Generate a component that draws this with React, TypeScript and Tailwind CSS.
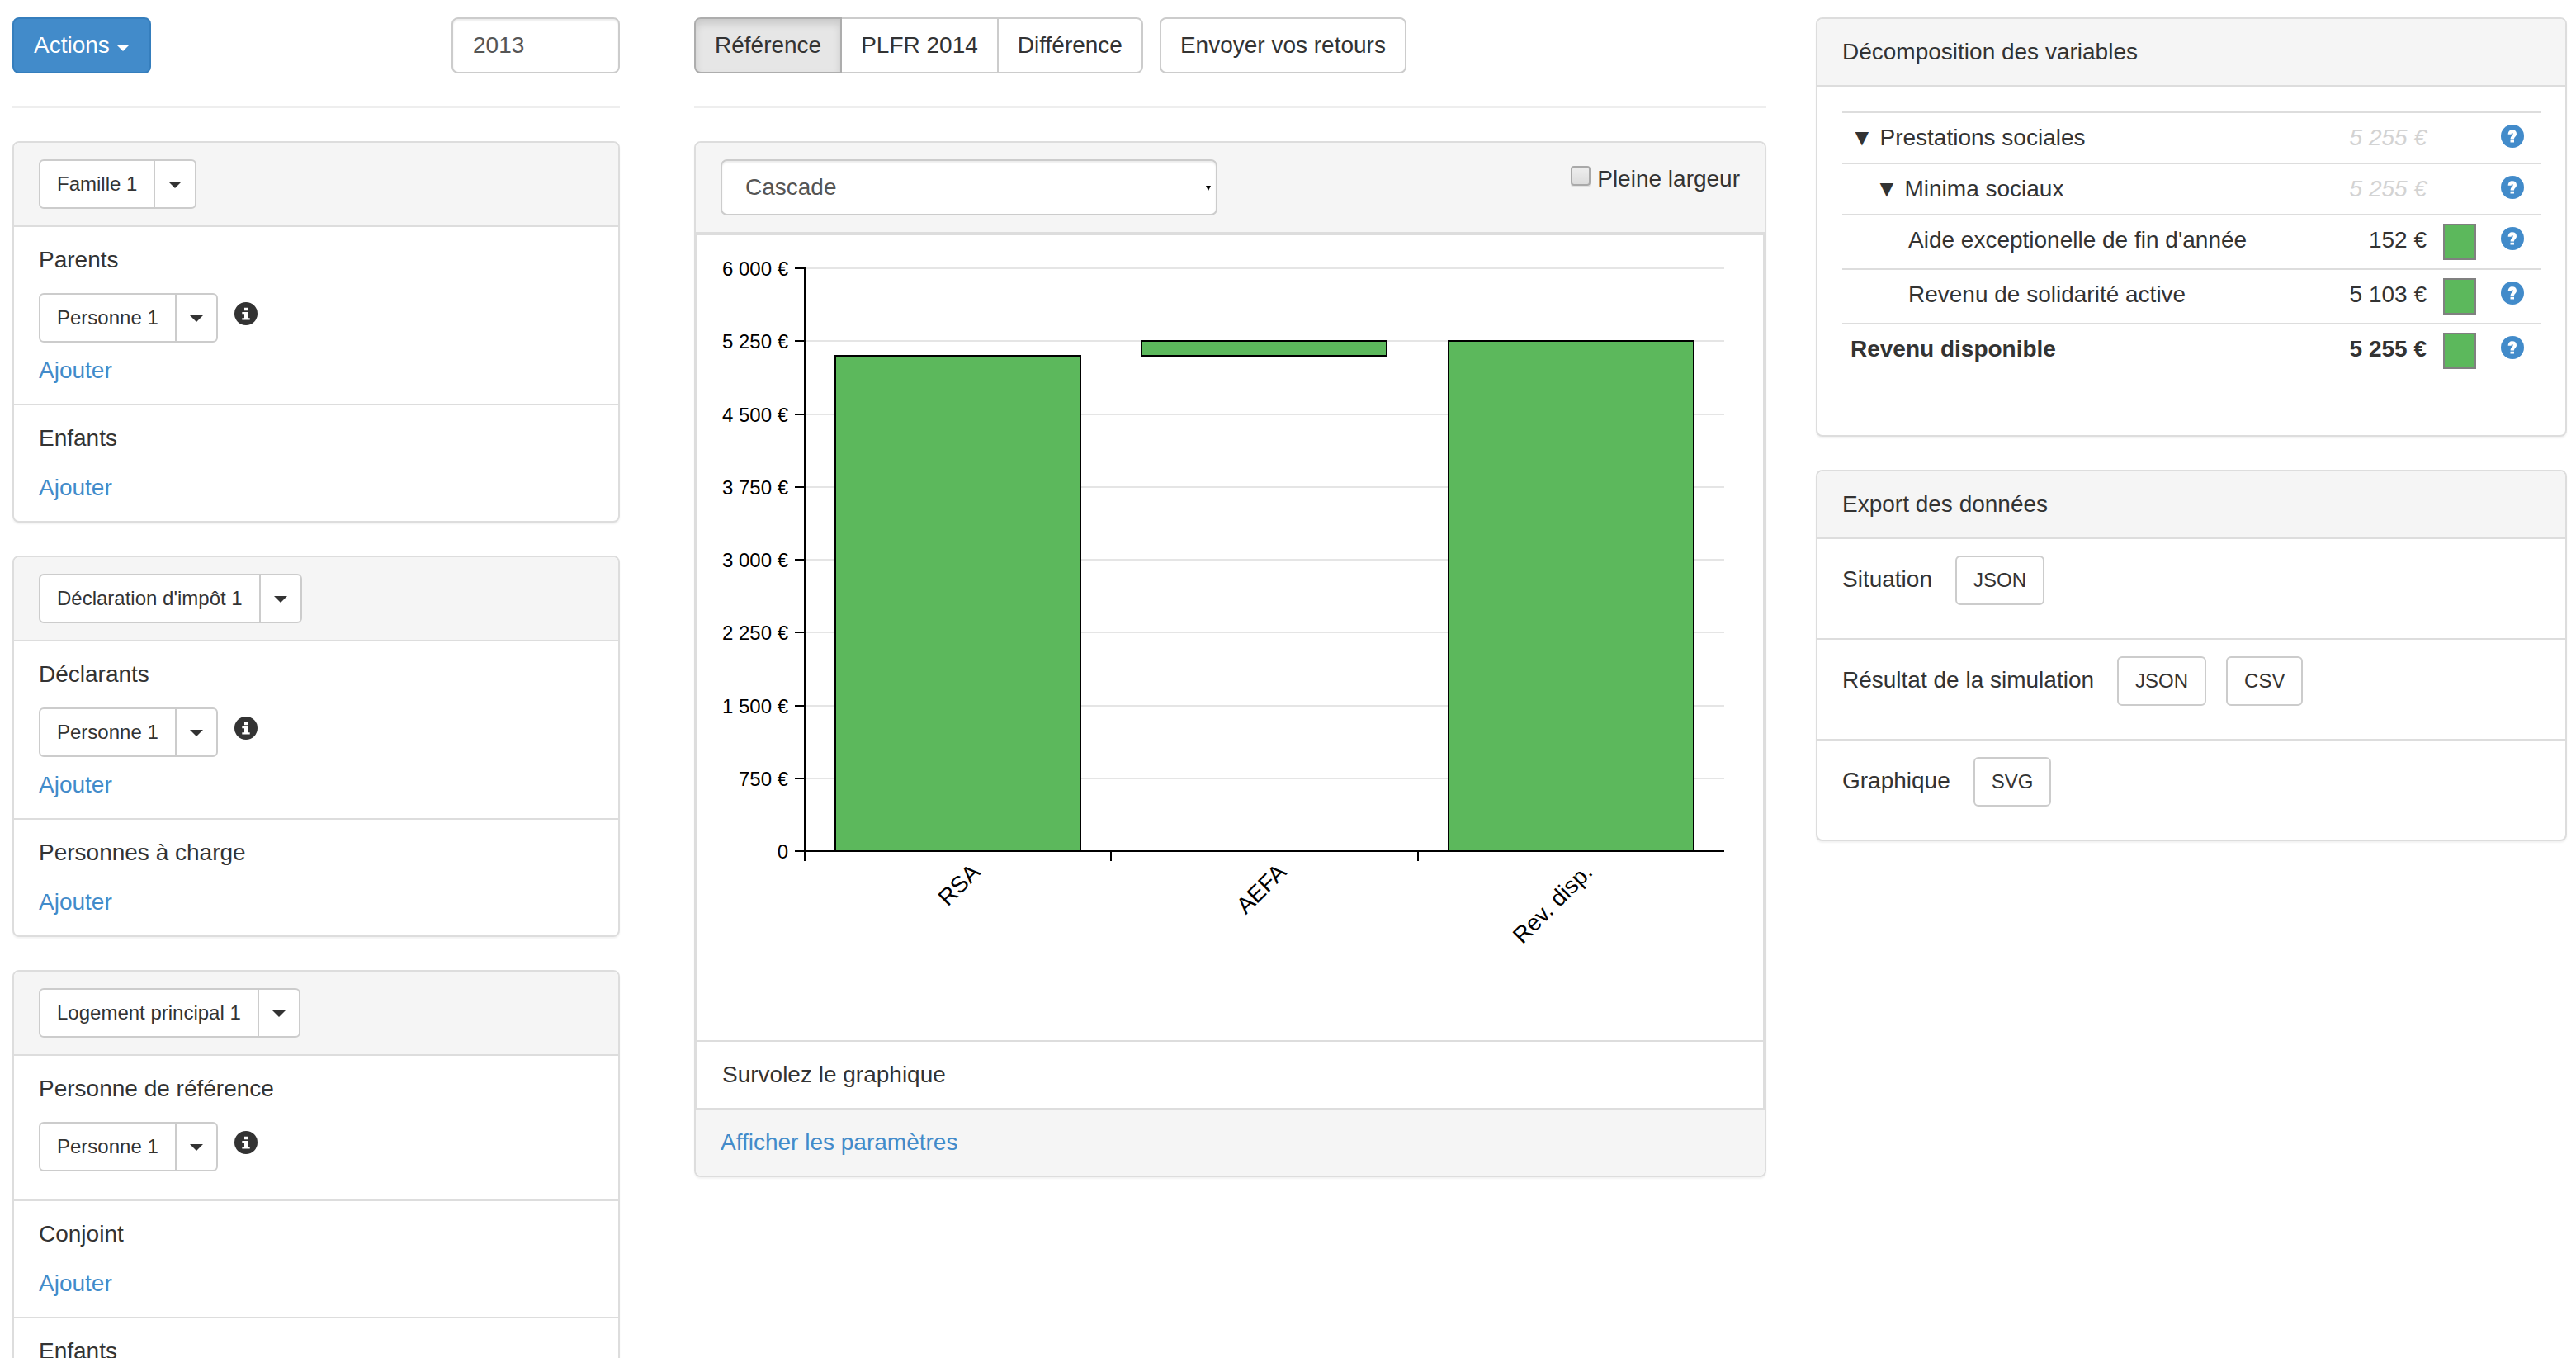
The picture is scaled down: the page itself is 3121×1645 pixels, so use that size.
import { useState, type ReactNode } from "react";

const panelClass =
  "flex flex-col overflow-hidden rounded-lg border-2 border-[#ddd] bg-white shadow-[0_2px_2px_rgba(0,0,0,0.05)]";
const smallButtonClass =
  "border-2 border-[#ccc] bg-white text-[24px] leading-9 hover:bg-[#ebebeb]";
const buttonClass =
  "border-2 py-3 text-[28px] leading-10 focus-visible:outline-2 focus-visible:outline-[#66afe9]";

function Caret({ className = "" }: { className?: string }) {
  return (
    <svg className={`h-2 w-4 shrink-0 fill-current ${className}`} viewBox="0 0 16 8" aria-hidden="true">
      <path d="M0 0h16L8 8z" />
    </svg>
  );
}

function InfoIcon() {
  return (
    <svg className="size-7" viewBox="0 0 28 28" aria-hidden="true">
      <circle cx="14" cy="14" r="14" fill="#333" />
      <path fill="#fff" d="M12 6.800h4.500v3.500H12zM9.300 12h7.200v7.200h2.200v2.200H9.300v-2.200h2.700v-5H9.300z" />
    </svg>
  );
}

function HelpIcon() {
  return (
    <svg className="size-7" viewBox="0 0 28 28" aria-hidden="true">
      <circle cx="14" cy="14" r="14" fill="#428bca" />
      <path
        fill="#fff"
        d="M8.700 11.800C8.700 8.200 10.800 6.200 13.900 6.200C17 6.200 19 8.100 19 10.900C19 14.400 16 14.500 16 17.400H11.600C11.600 13.800 14.600 13.200 14.600 11.300C14.600 10.300 14.300 9.900 13.700 9.900C13 9.900 12.700 10.500 12.700 11.800ZM11.500 18.800H16V21.600H11.500Z"
      />
    </svg>
  );
}

function SplitButton({ label }: { label: string }) {
  return (
    <div className="flex">
      <button type="button" className={`${smallButtonClass} rounded-l-md px-5 py-2.5`}>
        {label}
      </button>
      <button
        type="button"
        aria-label={`Options de ${label}`}
        className={`${smallButtonClass} -ml-0.5 flex items-center rounded-r-md px-4`}
      >
        <Caret className="mt-0.5" />
      </button>
    </div>
  );
}

type Role = { title: string; person?: string; canAdd: boolean };

function EntityPanel({ name, roles }: { name: string; roles: Role[] }) {
  return (
    <section className={panelClass}>
      <header className="flex bg-[#f5f5f5] px-[30px] py-5">
        <SplitButton label={name} />
      </header>
      {roles.map((role) => (
        <div key={role.title} className="border-t-2 border-[#ddd] px-[30px] py-5">
          <p className="mb-5">{role.title}</p>
          {role.person && (
            <div className="mb-3.5 flex items-start gap-5">
              <SplitButton label={role.person} />
              <button type="button" aria-label={`Informations sur ${role.person}`} className="mt-[11px]">
                <InfoIcon />
              </button>
            </div>
          )}
          {role.canAdd && (
            <a href="#ajouter" className="block text-[#428bca]">
              Ajouter
            </a>
          )}
        </div>
      ))}
    </section>
  );
}

const entities: { name: string; roles: Role[] }[] = [
  {
    name: "Famille 1",
    roles: [
      { title: "Parents", person: "Personne 1", canAdd: true },
      { title: "Enfants", canAdd: true },
    ],
  },
  {
    name: "Déclaration d'impôt 1",
    roles: [
      { title: "Déclarants", person: "Personne 1", canAdd: true },
      { title: "Personnes à charge", canAdd: true },
    ],
  },
  {
    name: "Logement principal 1",
    roles: [
      { title: "Personne de référence", person: "Personne 1", canAdd: false },
      { title: "Conjoint", canAdd: true },
      { title: "Enfants", canAdd: true },
    ],
  },
];

const bars = [
  { label: "RSA", from: 0, to: 5103 },
  { label: "AEFA", from: 5103, to: 5255 },
  { label: "Rev. disp.", from: 0, to: 5255 },
];
const yTicks = [0, 750, 1500, 2250, 3000, 3750, 4500, 5250, 6000];

const formatEuros = (value: number) =>
  value === 0 ? "0" : `${String(value).replace(/(\d)(\d{3})$/, "$1\u00a0$2")}\u00a0€`;

function WaterfallChart() {
  const left = 130;
  const right = 1244;
  const top = 40;
  const bottom = 746;
  const band = (right - left) / bars.length;
  const y = (value: number) => Math.round(bottom - (value / 6000) * (bottom - top));
  return (
    <svg className="block h-auto w-full" viewBox="0 0 1291 975" role="img" aria-label="Cascade">
      {yTicks.slice(1).map((tick) => (
        <line key={tick} x1={left} x2={right} y1={y(tick)} y2={y(tick)} stroke="#e5e5e5" strokeWidth="2" />
      ))}
      {bars.map((bar, index) => (
        <rect
          key={bar.label}
          x={Math.round(left + band * (index + 0.1))}
          y={y(bar.to)}
          width={Math.round(band * 0.8)}
          height={y(bar.from) - y(bar.to)}
          fill="#5cb85c"
          stroke="#000"
          strokeWidth="2"
        />
      ))}
      <g stroke="#000" strokeWidth="2">
        <line x1={left} x2={left} y1={top - 1} y2={bottom + 12} />
        <line x1={left} x2={right} y1={bottom} y2={bottom} />
        {yTicks.map((tick) => (
          <line key={tick} x1={left - 12} x2={left} y1={y(tick)} y2={y(tick)} />
        ))}
        {[1, 2].map((index) => {
          const x = Math.round(left + band * index);
          return <line key={index} x1={x} x2={x} y1={bottom} y2={bottom + 12} />;
        })}
      </g>
      <g fontSize="24" textAnchor="end">
        {yTicks.map((tick) => (
          <text key={tick} x={left - 20} y={y(tick) + 9}>
            {formatEuros(tick)}
          </text>
        ))}
      </g>
      <g fontSize="28" textAnchor="end">
        {bars.map((bar, index) => {
          const x = Math.round(left + band * (index + 0.5)) + 28;
          return (
            <text key={bar.label} transform={`translate(${x} ${bottom + 27}) rotate(-45)`}>
              {bar.label}
            </text>
          );
        })}
      </g>
    </svg>
  );
}

function VariableRow({
  name,
  indent,
  value,
  kind,
}: {
  name: ReactNode;
  indent: string;
  value: string;
  kind: "group" | "leaf" | "total";
}) {
  const weight = kind === "total" ? "font-bold" : "font-normal";
  return (
    <tr className="border-t-2 border-[#ddd] align-top">
      <th scope="row" className={`py-2.5 pr-2.5 text-left ${weight} ${indent}`}>
        {name}
      </th>
      <td
        className={`px-2.5 py-2.5 text-right whitespace-nowrap ${weight} ${
          kind === "group" ? "text-[#d3d3d3] italic" : ""
        }`}
      >
        {value}
      </td>
      <td className="w-[60px] px-2.5 py-2.5">
        {kind !== "group" && <div className="h-11 w-10 border-2 border-[#808080] bg-[#5cb85c]" />}
      </td>
      <td className="w-[68px] px-2.5 py-2.5">
        <button type="button" aria-label="Aide" className="mx-auto mt-1 block">
          <HelpIcon />
        </button>
      </td>
    </tr>
  );
}

function ExportRow({ label, formats }: { label: string; formats: string[] }) {
  return (
    <div className="flex items-baseline gap-7 border-t-2 border-[#ddd] px-[30px] pt-5 pb-10">
      <span>{label}</span>
      <div className="flex gap-6">
        {formats.map((format) => (
          <button key={format} type="button" className={`${smallButtonClass} rounded-md px-5 py-2.5`}>
            {format}
          </button>
        ))}
      </div>
    </div>
  );
}

const scenarios = ["Référence", "PLFR 2014", "Différence"];

export default function App() {
  const [scenario, setScenario] = useState("Référence");
  const [fullWidth, setFullWidth] = useState(false);

  return (
    <div className="h-screen overflow-hidden bg-white font-['Liberation_Sans',Arial,sans-serif] text-[28px] leading-10 text-[#333]">
      <div className="grid grid-cols-[736fr_1329fr_910fr] items-start gap-[60px] pt-[21px] pr-[11px] pl-[15px]">
        <aside className="flex min-w-0 flex-col gap-10">
          <div className="flex justify-between border-b-2 border-[#eee] pb-10">
            <button
              type="button"
              className={`${buttonClass} flex items-center gap-2 rounded-lg border-[#357ebd] bg-[#428bca] px-6 text-white`}
            >
              Actions
              <Caret className="mt-1.5" />
            </button>
            <input
              type="text"
              aria-label="Année"
              defaultValue="2013"
              className="w-[204px] rounded-lg border-2 border-[#ccc] bg-white px-6 py-3 leading-10 text-[#555] shadow-[inset_0_2px_2px_rgba(0,0,0,0.075)]"
            />
          </div>
          {entities.map((entity) => (
            <EntityPanel key={entity.name} name={entity.name} roles={entity.roles} />
          ))}
        </aside>

        <main className="flex min-w-0 flex-col gap-10 pl-[30px]">
          <div className="flex gap-5 border-b-2 border-[#eee] pb-10">
            <div className="flex" role="group" aria-label="Scénario">
              {scenarios.map((name) => (
                <button
                  key={name}
                  type="button"
                  aria-pressed={scenario === name}
                  onClick={() => setScenario(name)}
                  className={`${buttonClass} -ml-0.5 px-[23px] first:ml-0 first:rounded-l-lg last:rounded-r-lg ${
                    scenario === name
                      ? "relative border-[#adadad] bg-[#e6e6e6] shadow-[inset_0_6px_10px_rgba(0,0,0,0.125)]"
                      : "border-[#ccc] bg-white"
                  }`}
                >
                  {name}
                </button>
              ))}
            </div>
            <button type="button" className={`${buttonClass} rounded-lg border-[#ccc] bg-white px-[23px]`}>
              Envoyer vos retours
            </button>
          </div>

          <section className={panelClass}>
            <header className="flex items-start justify-between border-b-2 border-[#ddd] bg-[#f5f5f5] px-[30px] py-5">
              <div className="relative w-[602px]">
                <select
                  aria-label="Type de graphique"
                  className="block w-full appearance-none rounded-lg border-2 border-[#ccc] bg-white py-3 pr-6 pl-7 leading-10 text-[#555] shadow-[inset_0_2px_2px_rgba(0,0,0,0.075)]"
                >
                  <option>Cascade</option>
                </select>
                <svg
                  className="pointer-events-none absolute top-8 right-2 h-1.5 w-1.5"
                  viewBox="0 0 6 6"
                  aria-hidden="true"
                >
                  <path d="M0 0h6L3 6z" />
                </svg>
              </div>
              <label className="mt-1 flex items-start gap-2">
                <input
                  type="checkbox"
                  checked={fullWidth}
                  onChange={(event) => setFullWidth(event.target.checked)}
                  className="mt-1 size-6 appearance-none rounded border-2 border-[#a9a9a9] bg-linear-to-b from-[#eee] to-[#dcdcdc] shadow-[0_2px_0_rgba(0,0,0,0.08)] checked:from-[#428bca] checked:to-[#428bca]"
                />
                Pleine largeur
              </label>
            </header>
            <div className="border-2 border-[#ddd]">
              <WaterfallChart />
              <p className="border-t-2 border-[#ddd] px-[30px] py-5">Survolez le graphique</p>
            </div>
            <footer className="bg-[#f5f5f5] px-[30px] py-5">
              <a href="#parametres" className="text-[#428bca]">
                Afficher les paramètres
              </a>
            </footer>
          </section>
        </main>

        <aside className="flex min-w-0 flex-col gap-10">
          <section className={panelClass}>
            <h2 className="border-b-2 border-[#ddd] bg-[#f5f5f5] px-[30px] py-5">Décomposition des variables</h2>
            <div className="px-[30px] pt-[30px] pb-[70px]">
              <table className="w-full border-collapse">
                <tbody>
                  <VariableRow name="▼ Prestations sociales" indent="pl-2.5" value="5 255 €" kind="group" />
                  <VariableRow name="▼ Minima sociaux" indent="pl-10" value="5 255 €" kind="group" />
                  <VariableRow name="Aide exceptionelle de fin d'année" indent="pl-20" value="152 €" kind="leaf" />
                  <VariableRow name="Revenu de solidarité active" indent="pl-20" value="5 103 €" kind="leaf" />
                  <VariableRow name="Revenu disponible" indent="pl-2.5" value="5 255 €" kind="total" />
                </tbody>
              </table>
            </div>
          </section>

          <section className={panelClass}>
            <h2 className="bg-[#f5f5f5] px-[30px] py-5">Export des données</h2>
            <ExportRow label="Situation" formats={["JSON"]} />
            <ExportRow label="Résultat de la simulation" formats={["JSON", "CSV"]} />
            <ExportRow label="Graphique" formats={["SVG"]} />
          </section>
        </aside>
      </div>
    </div>
  );
}
